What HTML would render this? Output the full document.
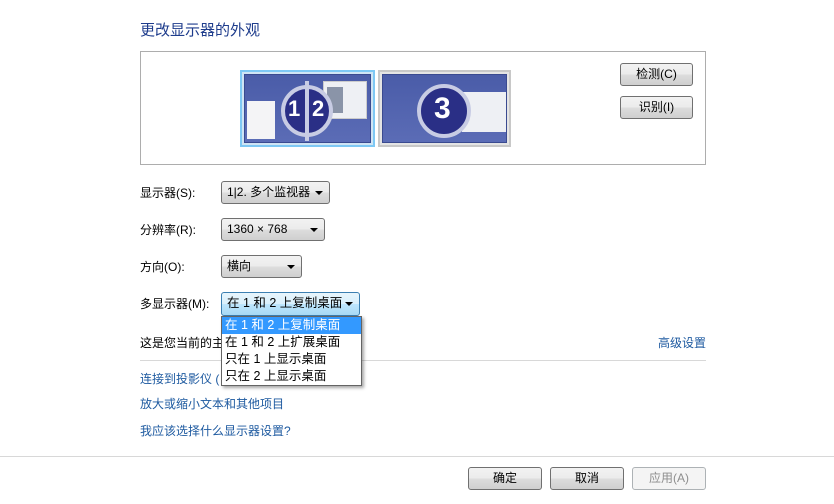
<!DOCTYPE html>
<html><head><meta charset="utf-8"><style>
*{margin:0;padding:0;box-sizing:border-box}
body{width:834px;height:504px;background:#fff;font-family:"Liberation Sans","Noto Sans CJK SC",sans-serif;font-size:12px;color:#000;position:relative;overflow:hidden}
.a{position:absolute;white-space:nowrap}
.btn{position:absolute;border:1px solid #707070;border-radius:3px;background:linear-gradient(#f2f2f2,#ebebeb 50%,#dddddd 51%,#cfcfcf);text-align:center;line-height:21px;font-size:12px}
.cb{position:absolute;border:1px solid #707070;border-radius:3px;background:linear-gradient(#f2f2f2,#ebebeb 50%,#dddddd 51%,#cfcfcf);padding-left:5px;line-height:21px}
.cb:after{content:"";position:absolute;right:6px;top:9px;border:4px solid transparent;border-top:4px solid #000;border-bottom:0}
.lnk{color:#1e5aa0}
.scr{width:100%;height:100%;background:linear-gradient(#4a5ca8,#5b6cb6);border:1px solid #3a4a90;position:relative;overflow:hidden}
</style></head><body>
<div class="a" style="left:140px;top:19px;font-size:15px;color:#1e3c8c">更改显示器的外观</div>
<div class="a" style="left:140px;top:51px;width:566px;height:114px;border:1px solid #adadad"></div>
<div class="a" style="left:240px;top:70px;width:135px;height:77px;border:2px solid #7ec8f4;background:#cfe4f4;padding:2px">
 <div class="scr">
  <div style="position:absolute;left:78px;top:6px;width:44px;height:38px;background:#eef0f4;border:1px solid #ccc"><div style="margin:5px 3px;width:16px;height:26px;background:#8a94a8"></div></div>
  <div style="position:absolute;left:2px;top:26px;width:28px;height:38px;background:#f4f4f6"></div>
  <div style="position:absolute;left:36px;top:10px;width:52px;height:52px;border-radius:50%;border:4px solid #c8cce4;background:#2a2f86"></div>
  <div style="position:absolute;left:60px;top:6px;width:4px;height:60px;background:#c8cce4"></div>
  <div style="position:absolute;left:43px;top:21px;font:bold 22px 'Liberation Sans';color:#fff">1</div>
  <div style="position:absolute;left:67px;top:21px;font:bold 22px 'Liberation Sans';color:#fff">2</div>
 </div></div>
<div class="a" style="left:378px;top:70px;width:133px;height:77px;border:2px solid #c8c8c8;background:#e4e4e4;padding:2px">
 <div class="scr">
  <div style="position:absolute;left:79px;top:17px;width:44px;height:40px;background:#eef0f4"></div>
  <div style="position:absolute;left:34px;top:9px;width:54px;height:54px;border-radius:50%;border:4px solid #c8cce4;background:#2a2f86"></div>
  <div style="position:absolute;left:51px;top:17px;font:bold 30px 'Liberation Sans';color:#fff">3</div>
 </div></div>
<div class="btn" style="left:620px;top:63px;width:73px;height:23px">检测(C)</div>
<div class="btn" style="left:620px;top:96px;width:73px;height:23px">识别(I)</div>
<div class="a" style="left:140px;top:184px">显示器(S):</div>
<div class="cb" style="left:221px;top:181px;width:109px;height:23px">1|2. 多个监视器</div>
<div class="a" style="left:140px;top:221px">分辨率(R):</div>
<div class="cb" style="left:221px;top:218px;width:104px;height:23px">1360 × 768</div>
<div class="a" style="left:140px;top:258px">方向(O):</div>
<div class="cb" style="left:221px;top:255px;width:81px;height:23px">横向</div>
<div class="a" style="left:140px;top:295px">多显示器(M):</div>
<div class="cb" style="left:221px;top:292px;width:139px;height:24px;border-color:#3c7fb1;background:linear-gradient(#e8f5fc,#d9f0fc 50%,#bee6fd 51%,#a7d9f5);font-size:12.5px">在 1 和 2 上复制桌面</div>
<div class="a" style="left:140px;top:334px">这是您当前的主</div>
<div class="a lnk" style="left:658px;top:334px">高级设置</div>
<div class="a" style="left:140px;top:360px;width:566px;height:1px;background:#d8d8d8"></div>
<div class="a lnk" style="left:140px;top:370px">连接到投影仪 (</div>
<div class="a lnk" style="left:140px;top:395px">放大或缩小文本和其他项目</div>
<div class="a lnk" style="left:140px;top:422px">我应该选择什么显示器设置?</div>
<div class="a" style="left:221px;top:316px;width:141px;height:70px;border:1px solid #646464;background:#fff;box-shadow:2px 2px 3px rgba(0,0,0,.35);font-size:12.5px;line-height:17px">
 <div style="background:#3399ff;color:#fff;padding-left:3px">在 1 和 2 上复制桌面</div>
 <div style="padding-left:3px">在 1 和 2 上扩展桌面</div>
 <div style="padding-left:3px">只在 1 上显示桌面</div>
 <div style="padding-left:3px">只在 2 上显示桌面</div>
</div>
<div class="a" style="left:0;top:456px;width:834px;height:1px;background:#d8d8d8"></div>
<div class="btn" style="left:468px;top:467px;width:74px;height:23px">确定</div>
<div class="btn" style="left:550px;top:467px;width:74px;height:23px">取消</div>
<div class="btn" style="left:632px;top:467px;width:74px;height:23px;background:#f4f4f4;border-color:#adb2b5;color:#8d8d8d">应用(A)</div>
</body></html>
